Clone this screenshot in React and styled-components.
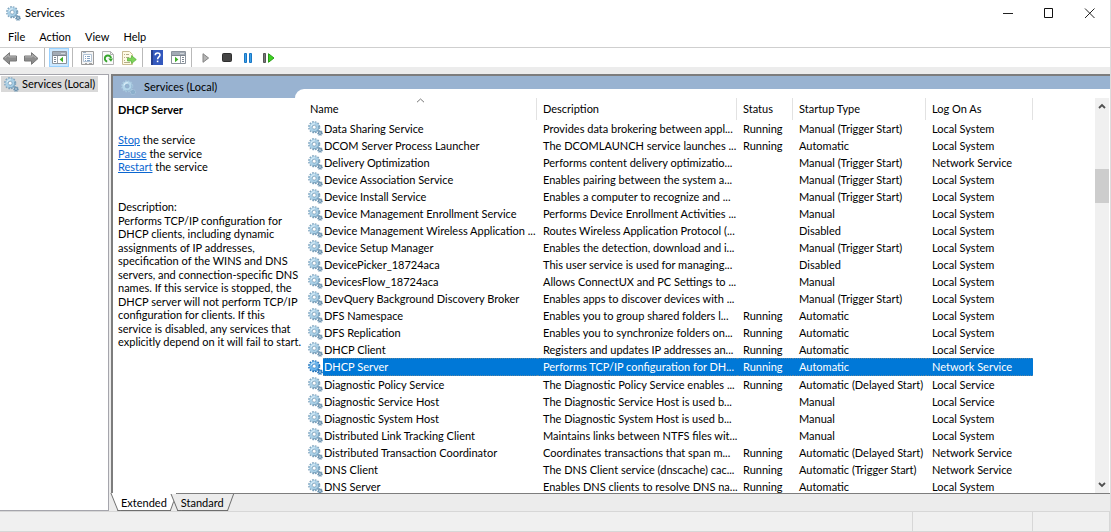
import React from 'react';
import styled, { createGlobalStyle, css } from 'styled-components';

const GlobalStyles = createGlobalStyle`
  * {
    box-sizing: border-box;
  }
  body {
    margin: 0;
    font-family: Lato, 'Open Sans', sans-serif;
    font-size: 11px;
    line-height: 14px;
    color: #000;
    background: #fff;
  }
  button {
    margin: 0;
    padding: 0;
    border: 0;
    background: none;
    font: inherit;
    color: inherit;
  }
  svg {
    display: block;
    flex: none;
  }
`;

const WindowFrame = styled.div`
  display: flex;
  flex-direction: column;
  height: 100vh;
  overflow: hidden;
  border-right: 1px solid #dcdcdc;
`;

const TitleBar = styled.header`
  display: flex;
  align-items: center;
  height: 26px;
  padding-left: 6px;
  h1 {
    flex: 1;
    margin: 0 0 0 4px;
    font-size: 11px;
    font-weight: 400;
  }
`;

const WindowButton = styled.button`
  display: flex;
  align-items: center;
  justify-content: center;
  width: 41px;
  height: 26px;
`;

const MenuBar = styled.nav`
  display: flex;
  gap: 14px;
  height: 22px;
  padding: 0 8px;
  border-bottom: 1px solid #cfcfcf;
`;

const ToolBar = styled.div`
  display: flex;
  align-items: center;
  height: 19px;
`;

const ToolGroup = styled.div`
  display: flex;
  gap: 1px;
  & + & {
    margin-left: 3px;
    padding-left: 4px;
    border-left: 1px solid #b9b9b9;
  }
`;

const ToolButton = styled.button`
  display: flex;
  align-items: center;
  justify-content: center;
  width: 20px;
  height: 19px;
  ${({ $active }) =>
    $active &&
    css`
      background: #cce8ff;
      border: 1px solid #99d1ff;
    `}
`;

const Workspace = styled.div`
  display: flex;
  flex: 1;
  gap: 2px;
  min-height: 0;
  padding-top: 7px;
  background: #ececec;
`;

const TreePane = styled.aside`
  width: 109px;
  padding: 1px;
  background: #fff;
  border: 1px solid #a5a5ac;
  border-left: 0;
`;

const TreeItem = styled.button`
  display: flex;
  align-items: center;
  gap: 3px;
  height: 16px;
  padding: 0 3px;
  background: #d9d9d9;
`;

const MainPane = styled.main`
  display: flex;
  flex: 1;
  flex-direction: column;
  min-width: 0;
`;

const PaneBody = styled.div`
  display: flex;
  flex: 1;
  min-height: 0;
  background: #fff;
  border: solid #7d7d7d;
  border-width: 2px 0 1px 2px;
`;

const Details = styled.section`
  z-index: 1;
  width: 182px;
  white-space: nowrap;
`;

const DetailsHeader = styled.div`
  display: flex;
  align-items: center;
  gap: 8px;
  height: 22px;
  padding-left: 8px;
  background: #99b3d1;
`;

const DetailsContent = styled.div`
  padding: 5px;
  h2 {
    margin: 0 0 16px;
    font-size: 11px;
    font-weight: 700;
  }
  a {
    color: #0a66d0;
  }
`;

const TextBlock = styled.div`
  margin-bottom: 26px;
`;

const TextLine = styled.div`
  height: 14px;
  &:nth-child(even) {
    height: 13px;
  }
`;

const ListArea = styled.section`
  display: flex;
  flex: 1;
  min-width: 0;
  padding-top: 13px;
  background: #99b3d1;
`;

const ListSheet = styled.div`
  display: flex;
  flex: 1;
  min-width: 0;
  padding: 9px 1px 0 9px;
  background: #fff;
  border-top-left-radius: 9px;
`;

const ListView = styled.div`
  flex: 1;
  min-width: 0;
  overflow: hidden;
`;

const ServiceTable = styled.table`
  width: 729px;
  table-layout: fixed;
  border-collapse: separate;
  border-spacing: 0;
  white-space: nowrap;
  th {
    position: relative;
    height: 22px;
    padding: 0 0 0 6px;
    font-weight: 400;
    text-align: left;
    border-right: 1px solid #e2e2e2;
  }
  td {
    height: 17px;
    padding: 0 0 0 6px;
    line-height: 17px;
  }
  td:first-child {
    padding-left: 4px;
  }
`;

const ServiceRow = styled.tr`
  ${({ $selected }) =>
    $selected &&
    css`
      color: #fff;
      td:not(:first-child),
      span {
        height: 18px;
        line-height: 16px;
        background: #0078d7;
        border: dotted #5d87a3;
        border-width: 1px 0;
      }
    `}
`;

const NameCell = styled.div`
  display: flex;
  align-items: center;
  span {
    flex: 1;
    padding-left: 1px;
  }
`;

const SortMark = styled.svg`
  position: absolute;
  top: 0;
  left: 112px;
`;

const ScrollBar = styled.div`
  display: flex;
  flex-direction: column;
  width: 14px;
  background: #f0f0f0;
`;

const ScrollButton = styled.button`
  display: flex;
  align-items: center;
  justify-content: center;
  height: 16px;
`;

const ScrollTrack = styled.div`
  flex: 1;
  padding-top: 55px;
`;

const ScrollThumb = styled.div`
  height: 34px;
  background: #cdcdcd;
`;

const TabStrip = styled.div`
  display: flex;
  height: 17px;
  padding-left: 3px;
`;

const Tab = styled.button`
  position: relative;
  isolation: isolate;
  height: 17px;
  padding: 0 7px;
  &::before,
  &::after {
    content: '';
    position: absolute;
    z-index: -1;
    top: ${({ $active }) => ($active ? '-1px' : '0')};
    bottom: 0;
    background: ${({ $active }) => ($active ? '#fff' : '#ececec')};
    border-bottom: 1px solid #6e6e6e;
  }
  &::before {
    left: 0;
    right: 10px;
    border-left: 1px solid #6e6e6e;
    transform: skewX(22deg);
  }
  &::after {
    left: 10px;
    right: 0;
    border-right: 1px solid #6e6e6e;
    transform: skewX(-20deg);
  }
`;

const StatusBar = styled.footer`
  display: flex;
  height: 21px;
  background: #f0f0f0;
  border: solid #d7d7d7;
  border-width: 1px 0;
`;

const StatusCell = styled.div`
  flex: ${({ $width }) => ($width ? `0 0 ${$width}px` : '1')};
  border-right: 1px solid #d7d7d7;
`;

function GearIcon({ pale, selected }) {
  const rim = selected ? '#1d6fb8' : pale ? '#a9c8de' : '#7fa3bd';
  const body = selected ? '#6ab4ec' : pale ? '#b4d6ea' : '#a9cfe6';
  const edge = selected ? '#1d6fb8' : pale ? '#88aeca' : '#5f89a8';
  const hole = pale ? '#99b3d1' : '#fff';
  return (
    <svg width="15" height="15" viewBox="0 0 15 15" aria-hidden="true">
      <circle cx="6.2" cy="6.2" r="5.2" fill="none" stroke={rim} strokeWidth="1.8" strokeDasharray="1.7 1.02" />
      <circle cx="6.2" cy="6.2" r="3.4" fill="none" stroke={body} strokeWidth="3" />
      <path d="M10.6 4.6A4.7 4.7 0 0 1 4.6 10.6" fill="none" stroke={edge} strokeWidth="0.7" />
      <circle cx="6.2" cy="6.2" r="1.9" fill={hole} stroke={edge} strokeWidth="0.6" />
      <path d="M2.9 5.4A3.5 3.5 0 0 1 6.8 2.7" fill="none" stroke="#e4f3fb" strokeWidth="1" />
      <circle cx="12" cy="12" r="2.3" fill="none" stroke={rim} strokeWidth="1.2" strokeDasharray="1.1 0.7" />
      <circle cx="12" cy="12" r="1.4" fill={hole} stroke={edge} strokeWidth="1.3" />
    </svg>
  );
}

function ArrowIcon({ forward }) {
  return (
    <svg width="16" height="14" viewBox="0 0 16 14" aria-hidden="true">
      <g transform={forward ? 'translate(16 0) scale(-1 1)' : undefined}>
        <path d="M1 7.5L7.5 1.7V5H14.5V10H7.5V13.3Z" fill="#8d8d8d" stroke="#777" strokeWidth="1" strokeLinejoin="round" />
        <path d="M3 7.1L6.8 3.8V5.9H14" fill="none" stroke="#b5b5b5" />
      </g>
    </svg>
  );
}

function PaneIcon({ flipped }) {
  return (
    <svg width="15" height="13" viewBox="0 0 15 13" aria-hidden="true">
      <path d="M0.5 0.5H14.5V12.5H0.5Z" fill="#fff" stroke="#8b929b" />
      <path d="M1 1H14V4H1Z" fill="#a3abb5" />
      <path d="M9.5 2.5H10.5M11.5 2.5H12.5" stroke="#fff" />
      <path d="M1 4.5H14" stroke="#7c848e" />
      {flipped ? (
        <>
          <path d="M9.5 5V12" stroke="#9aa1aa" />
          <path d="M11 6.5H13M11 8.5H13M11 10.5H13" stroke="#7d8894" />
          <path d="M4 5.8V11.2L7.4 8.5Z" fill="#3fae29" />
        </>
      ) : (
        <>
          <path d="M5.5 5V12" stroke="#9aa1aa" />
          <path d="M2 6.5H4M2 8.5H4M2 10.5H4" stroke="#7d8894" />
          <path d="M11 5.8V11.2L7.6 8.5Z" fill="#3fae29" />
        </>
      )}
    </svg>
  );
}

function PropertiesIcon() {
  return (
    <svg width="13" height="14" viewBox="0 0 13 14" aria-hidden="true">
      <path d="M0.5 0.5H12.5V13.5H0.5Z" fill="#f4f4f4" stroke="#9c9c9c" />
      <path d="M2.5 3.5H10.5V10.5H2.5Z" fill="#fff" stroke="#b3c4d6" />
      <path d="M2 1.5H5" stroke="#9db1c6" />
      <path d="M4 5.5H5M6 5.5H9M4 7.5H5M6 7.5H9M4 9.5H5M6 9.5H9" stroke="#86a4c4" />
      <path d="M4 12.5H6M8 12.5H11" stroke="#a6a6a6" />
    </svg>
  );
}

function RefreshIcon() {
  return (
    <svg width="12" height="14" viewBox="0 0 12 14" aria-hidden="true">
      <path d="M0.5 0.5H8.5L11.5 3.5V13.5H0.5Z" fill="#fafafa" stroke="#b3b3b3" />
      <path d="M8.5 0.5V3.5H11.5" fill="none" stroke="#b3b3b3" />
      <path d="M5.2 10.6A3.1 3.1 0 1 1 9 7.2" fill="none" stroke="#35a52b" strokeWidth="1.8" />
      <path d="M6.2 7.4H11L9 10.8Z" fill="#35a52b" />
    </svg>
  );
}

function ExportIcon() {
  return (
    <svg width="15" height="14" viewBox="0 0 15 14" aria-hidden="true">
      <path d="M0.5 0.5H7.5L10.5 3.5V13.5H0.5Z" fill="#fffbe6" stroke="#c9bc93" />
      <path d="M2 3.5H3M4 3.5H7M2 6.5H3M4 6.5H7M2 9.5H3M2 11.5H8" stroke="#b5ab8a" />
      <path d="M5.5 7.2H9.5V4.6L14.3 8.6L9.5 12.6V10H5.5Z" fill="#7ed35a" stroke="#52b033" strokeWidth="0.7" />
    </svg>
  );
}

function HelpIcon() {
  return (
    <svg width="12" height="15" viewBox="0 0 12 15" aria-hidden="true">
      <path d="M0 0H12V15H0Z" fill="#3358bd" />
      <path d="M1 0V15" stroke="#27408f" strokeWidth="2" />
      <path d="M4.2 5.2C4.2 2.2 9 2.2 9 5C9 6.9 6.6 6.9 6.6 9.2" fill="none" stroke="#fff" strokeWidth="1.5" />
      <path d="M5.8 10.6H7.4V12.2H5.8Z" fill="#fff" />
    </svg>
  );
}

function PlayIcon() {
  return (
    <svg width="8" height="10" viewBox="0 0 8 10" aria-hidden="true">
      <path d="M1 0.7V9.3L6.6 5Z" fill="#b4b4b4" stroke="#828282" />
    </svg>
  );
}

function StopIcon() {
  return (
    <svg width="10" height="10" viewBox="0 0 10 10" aria-hidden="true">
      <rect x="0.5" y="0.5" width="9" height="8" rx="1" fill="#454545" stroke="#2f2f2f" />
    </svg>
  );
}

function PauseIcon() {
  return (
    <svg width="8" height="10" viewBox="0 0 8 10" aria-hidden="true">
      <path d="M0.5 0.5H2.5V9.5H0.5ZM5.5 0.5H7.5V9.5H5.5Z" fill="#3ba0e8" stroke="#1976c4" />
    </svg>
  );
}

function RestartIcon() {
  return (
    <svg width="12" height="10" viewBox="0 0 12 10" aria-hidden="true">
      <path d="M0.5 0.5H2.5V9.5H0.5Z" fill="#777" stroke="#555" />
      <path d="M5.5 0.7V9.3L11 5Z" fill="#3ed321" stroke="#2a9e17" />
    </svg>
  );
}

function Chevron({ down }) {
  return (
    <svg width="8" height="6" viewBox="0 0 8 6" aria-hidden="true">
      <path d={down ? 'M1 1L4 4L7 1' : 'M1 5L4 2L7 5'} fill="none" stroke="#505050" strokeWidth="1.8" />
    </svg>
  );
}

const menus = ['File', 'Action', 'View', 'Help'];

const toolGroups = [
  [
    { label: 'Back', icon: <ArrowIcon /> },
    { label: 'Forward', icon: <ArrowIcon forward /> },
  ],
  [{ label: 'Show/Hide Console Tree', icon: <PaneIcon />, active: true }],
  [
    { label: 'Properties', icon: <PropertiesIcon /> },
    { label: 'Refresh', icon: <RefreshIcon /> },
    { label: 'Export List', icon: <ExportIcon /> },
  ],
  [
    { label: 'Help topics', icon: <HelpIcon /> },
    { label: 'Show/Hide Action Pane', icon: <PaneIcon flipped /> },
  ],
  [
    { label: 'Start Service', icon: <PlayIcon /> },
    { label: 'Stop Service', icon: <StopIcon /> },
    { label: 'Pause Service', icon: <PauseIcon /> },
    { label: 'Restart Service', icon: <RestartIcon /> },
  ],
];

const actions = ['Stop', 'Pause', 'Restart'];

const description = [
  'Description:',
  'Performs TCP/IP configuration for',
  'DHCP clients, including dynamic',
  'assignments of IP addresses,',
  'specification of the WINS and DNS',
  'servers, and connection-specific DNS',
  'names. If this service is stopped, the',
  'DHCP server will not perform TCP/IP',
  'configuration for clients. If this',
  'service is disabled, any services that',
  'explicitly depend on it will fail to start.',
];

const columns = [
  { title: 'Name', width: 233 },
  { title: 'Description', width: 200 },
  { title: 'Status', width: 56 },
  { title: 'Startup Type', width: 133 },
  { title: 'Log On As', width: 107 },
];

const services = [
  ['Data Sharing Service', 'Provides data brokering between appl...', 'Running', 'Manual (Trigger Start)', 'Local System'],
  ['DCOM Server Process Launcher', 'The DCOMLAUNCH service launches ...', 'Running', 'Automatic', 'Local System'],
  ['Delivery Optimization', 'Performs content delivery optimizatio...', '', 'Manual (Trigger Start)', 'Network Service'],
  ['Device Association Service', 'Enables pairing between the system a...', '', 'Manual (Trigger Start)', 'Local System'],
  ['Device Install Service', 'Enables a computer to recognize and ...', '', 'Manual (Trigger Start)', 'Local System'],
  ['Device Management Enrollment Service', 'Performs Device Enrollment Activities ...', '', 'Manual', 'Local System'],
  ['Device Management Wireless Application ...', 'Routes Wireless Application Protocol (...', '', 'Disabled', 'Local System'],
  ['Device Setup Manager', 'Enables the detection, download and i...', '', 'Manual (Trigger Start)', 'Local System'],
  ['DevicePicker_18724aca', 'This user service is used for managing...', '', 'Disabled', 'Local System'],
  ['DevicesFlow_18724aca', 'Allows ConnectUX and PC Settings to ...', '', 'Manual', 'Local System'],
  ['DevQuery Background Discovery Broker', 'Enables apps to discover devices with ...', '', 'Manual (Trigger Start)', 'Local System'],
  ['DFS Namespace', 'Enables you to group shared folders l...', 'Running', 'Automatic', 'Local System'],
  ['DFS Replication', 'Enables you to synchronize folders on...', 'Running', 'Automatic', 'Local System'],
  ['DHCP Client', 'Registers and updates IP addresses an...', 'Running', 'Automatic', 'Local Service'],
  ['DHCP Server', 'Performs TCP/IP configuration for DH...', 'Running', 'Automatic', 'Network Service'],
  ['Diagnostic Policy Service', 'The Diagnostic Policy Service enables ...', 'Running', 'Automatic (Delayed Start)', 'Local Service'],
  ['Diagnostic Service Host', 'The Diagnostic Service Host is used b...', '', 'Manual', 'Local Service'],
  ['Diagnostic System Host', 'The Diagnostic System Host is used b...', '', 'Manual', 'Local System'],
  ['Distributed Link Tracking Client', 'Maintains links between NTFS files wit...', '', 'Manual', 'Local System'],
  ['Distributed Transaction Coordinator', 'Coordinates transactions that span m...', 'Running', 'Automatic (Delayed Start)', 'Network Service'],
  ['DNS Client', 'The DNS Client service (dnscache) cac...', 'Running', 'Automatic (Trigger Start)', 'Network Service'],
  ['DNS Server', 'Enables DNS clients to resolve DNS na...', 'Running', 'Automatic', 'Local System'],
];

function ServiceList({ selectedName }) {
  return (
    <ServiceTable>
      <colgroup>
        {columns.map(({ title, width }) => (
          <col key={title} width={width} />
        ))}
      </colgroup>
      <thead>
        <tr>
          {columns.map(({ title }) => (
            <th key={title} scope="col">
              {title}
              {title === 'Name' && (
                <SortMark width="9" height="5" viewBox="0 0 9 5" aria-hidden="true">
                  <path d="M1 4.2L4.5 1L8 4.2" fill="none" stroke="#777" />
                </SortMark>
              )}
            </th>
          ))}
        </tr>
      </thead>
      <tbody>
        {services.map(([name, ...cells]) => (
          <ServiceRow key={name} $selected={name === selectedName}>
            <td>
              <NameCell>
                <GearIcon selected={name === selectedName} />
                <span>{name}</span>
              </NameCell>
            </td>
            {cells.map((cell, index) => (
              <td key={columns[index + 1].title}>{cell}</td>
            ))}
          </ServiceRow>
        ))}
      </tbody>
    </ServiceTable>
  );
}

function App() {
  return (
    <>
      <GlobalStyles />
      <WindowFrame>
        <TitleBar>
          <GearIcon />
          <h1>Services</h1>
          <WindowButton aria-label="Minimize">
            <svg width="11" height="11" viewBox="0 0 11 11">
              <path d="M1 5.5H11" stroke="#222" />
            </svg>
          </WindowButton>
          <WindowButton aria-label="Maximize">
            <svg width="11" height="11" viewBox="0 0 11 11">
              <path d="M1.5 0.5H9.5V9.5H1.5Z" fill="none" stroke="#111" />
            </svg>
          </WindowButton>
          <WindowButton aria-label="Close">
            <svg width="11" height="11" viewBox="0 0 11 11">
              <path d="M1 0.5L10.5 10M10.5 0.5L1 10" stroke="#222" />
            </svg>
          </WindowButton>
        </TitleBar>
        <MenuBar>
          {menus.map((menu) => (
            <button key={menu} type="button">
              {menu}
            </button>
          ))}
        </MenuBar>
        <ToolBar>
          {toolGroups.map((group) => (
            <ToolGroup key={group[0].label}>
              {group.map(({ label, icon, active }) => (
                <ToolButton key={label} aria-label={label} $active={active}>
                  {icon}
                </ToolButton>
              ))}
            </ToolGroup>
          ))}
        </ToolBar>
        <Workspace>
          <TreePane>
            <TreeItem type="button">
              <GearIcon />
              Services (Local)
            </TreeItem>
          </TreePane>
          <MainPane>
            <PaneBody>
              <Details>
                <DetailsHeader>
                  <GearIcon pale />
                  Services (Local)
                </DetailsHeader>
                <DetailsContent>
                  <h2>DHCP Server</h2>
                  <TextBlock>
                    {actions.map((action) => (
                      <TextLine key={action}>
                        <a href={`#${action.toLowerCase()}`}>{action}</a> the service
                      </TextLine>
                    ))}
                  </TextBlock>
                  <TextBlock>
                    {description.map((line) => (
                      <TextLine key={line}>{line}</TextLine>
                    ))}
                  </TextBlock>
                </DetailsContent>
              </Details>
              <ListArea>
                <ListSheet>
                  <ListView>
                    <ServiceList selectedName="DHCP Server" />
                  </ListView>
                  <ScrollBar>
                    <ScrollButton aria-label="Scroll up">
                      <Chevron />
                    </ScrollButton>
                    <ScrollTrack>
                      <ScrollThumb />
                    </ScrollTrack>
                    <ScrollButton aria-label="Scroll down">
                      <Chevron down />
                    </ScrollButton>
                  </ScrollBar>
                </ListSheet>
              </ListArea>
            </PaneBody>
            <TabStrip>
              <Tab type="button" $active>
                Extended
              </Tab>
              <Tab type="button">Standard</Tab>
            </TabStrip>
          </MainPane>
        </Workspace>
        <StatusBar>
          <StatusCell />
          <StatusCell $width={120} />
          <StatusCell $width={77} />
        </StatusBar>
      </WindowFrame>
    </>
  );
}

export default App;
